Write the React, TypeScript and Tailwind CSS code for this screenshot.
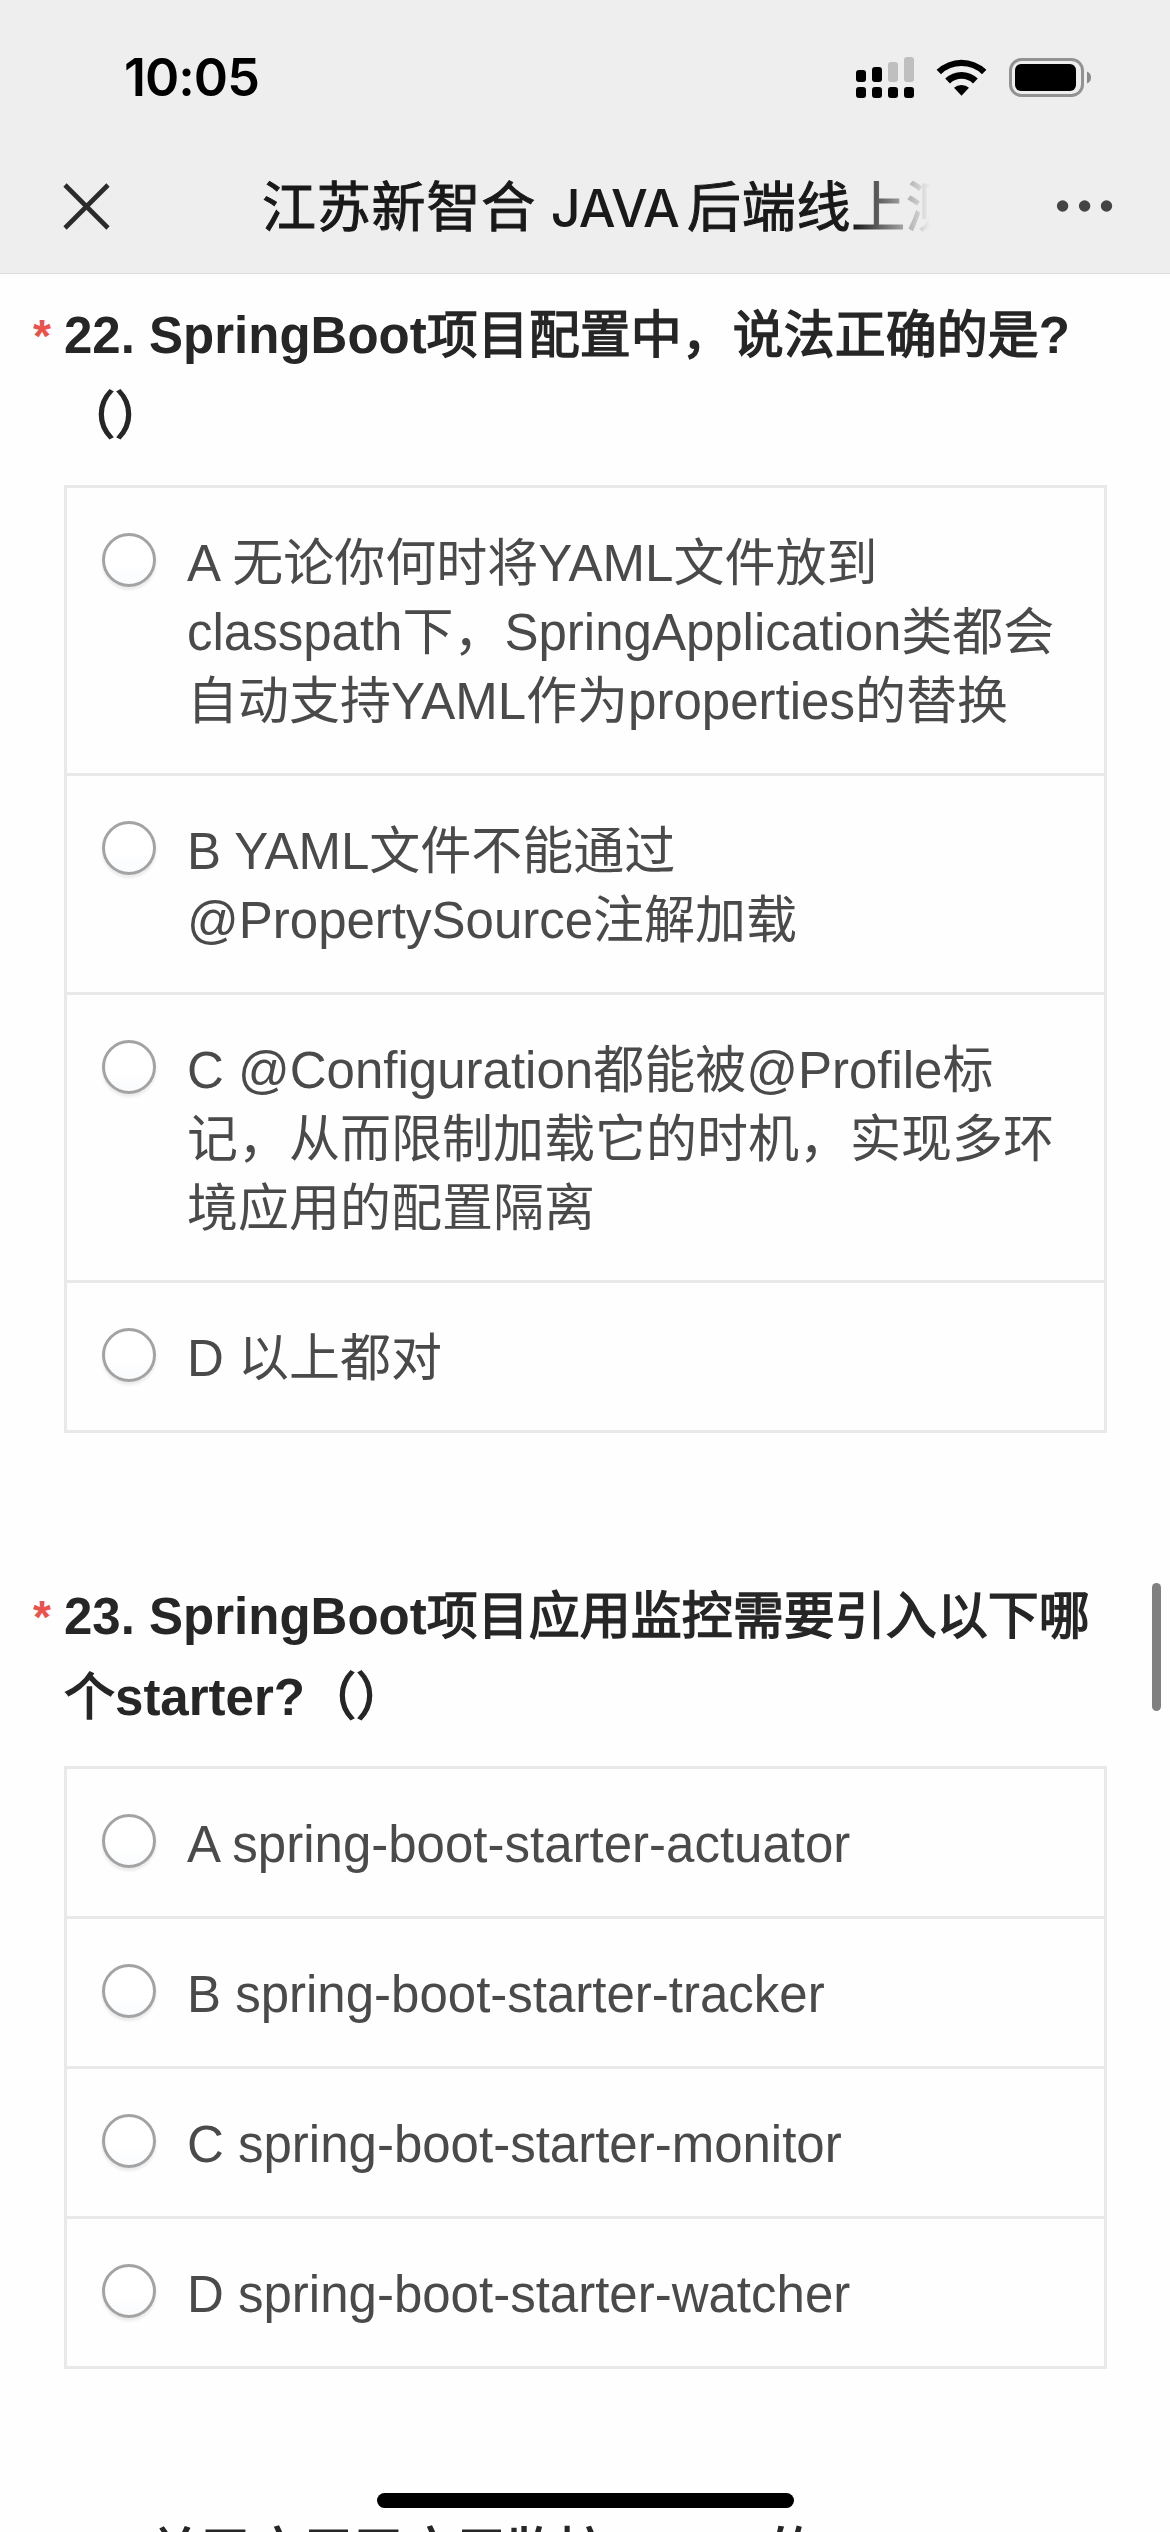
import React from "react";

type Question = {
  lines: string[];
  options: string[][];
};

const questions: Question[] = [
  {
    lines: ["22. SpringBoot项目配置中，说法正确的是?", "（）"],
    options: [
      ["A 无论你何时将YAML文件放到", "classpath下，SpringApplication类都会", "自动支持YAML作为properties的替换"],
      ["B YAML文件不能通过", "@PropertySource注解加载"],
      ["C @Configuration都能被@Profile标", "记，从而限制加载它的时机，实现多环", "境应用的配置隔离"],
      ["D 以上都对"],
    ],
  },
  {
    lines: ["23. SpringBoot项目应用监控需要引入以下哪", "个starter?（）"],
    options: [
      ["A spring-boot-starter-actuator"],
      ["B spring-boot-starter-tracker"],
      ["C spring-boot-starter-monitor"],
      ["D spring-boot-starter-watcher"],
    ],
  },
  {
    lines: ["24. 关于应用于应用监控starter的"],
    options: [],
  },
];

function StatusIcons() {
  return (
    <svg className="block" width="240" height="48" viewBox="852 54 240 48" fill="#000">
      <rect x="856" y="70" width="10" height="12" rx="3" />
      <rect x="872" y="67" width="10" height="15" rx="3" />
      <rect x="888" y="62" width="10" height="20" rx="3" fill="#bfbfbf" />
      <rect x="904" y="57" width="10" height="25" rx="3" fill="#bfbfbf" />
      <rect x="856" y="87" width="10" height="11" rx="3" />
      <rect x="872" y="87" width="10" height="11" rx="3" />
      <rect x="888" y="87" width="10" height="11" rx="3" />
      <rect x="904" y="87" width="10" height="11" rx="3" />
      <path d="M936.6 69.8 A36 36 0 0 1 986.4 69.8 L982 74.2 A29.5 29.5 0 0 0 941 74.2 Z" />
      <path d="M945.2 78.6 A23.5 23.5 0 0 1 977.8 78.6 L973 83.4 A16.8 16.8 0 0 0 950 83.4 Z" />
      <path d="M954 87.8 Q957 85 961.5 85 Q966 85 969 87.8 L961.5 95.8 Z" />
      <rect x="1010.5" y="59.5" width="72" height="36" rx="11" fill="none" stroke="#929292" strokeWidth="3" />
      <rect x="1015" y="64" width="61" height="27" rx="6" />
      <path d="M1087 71.5 Q1091 73 1091 77.5 Q1091 82 1087 83.5 Z" fill="#8a8a8a" />
    </svg>
  );
}

function OptionRow({ lines, last }: { lines: string[]; last: boolean }) {
  return (
    <div
      className={
        last
          ? "flex items-start pt-[41px] pb-[37px] pl-[35px]"
          : "flex items-start border-b-[3px] border-[#e9e9e9] pt-[41px] pb-[37px] pl-[35px]"
      }
    >
      <span className="mt-[4px] size-[54px] shrink-0 rounded-full border-[3px] border-[#a3a3a3] bg-gradient-to-b from-white from-60% to-[#f9fbfd] shadow-[0_3px_3px_rgba(0,0,0,0.08)]" />
      <span className="ml-[31px] text-[51px] leading-[69px] text-[#4a4a4a]">
        {lines.map((line) => (
          <span key={line} className="block whitespace-pre">
            {line}
          </span>
        ))}
      </span>
    </div>
  );
}

/* Chinese runs use a lighter weight than the bold Latin text beside them. */
function MixedText({ text }: { text: string }) {
  const runs = text.split(/([\u3000-\u9fff\uff00-\uffef]+)/).filter(Boolean);
  return (
    <>
      {runs.map((run, i) =>
        /[\u3000-\u9fff\uff00-\uffef]/.test(run) ? (
          <span key={i} className="font-normal [-webkit-text-stroke:1.5px_#262626]">
            {run}
          </span>
        ) : (
          <span key={i}>{run}</span>
        ),
      )}
    </>
  );
}

function QuestionBlock({ question }: { question: Question }) {
  return (
    <section className="mb-[143px]">
      <div className="flex h-[190px] pl-[33px]">
        <span className="w-[31px] shrink-0 text-[46px] leading-[82px] font-bold text-[#e9524d]">*</span>
        <h2 className="text-[51px] leading-[81px] font-bold text-[#262626]">
          {question.lines.map((line) => (
            <span key={line} className="block whitespace-pre">
              <MixedText text={line} />
            </span>
          ))}
        </h2>
      </div>
      {question.options.length > 0 && (
        <div className="ml-[64px] w-[1043px] border-[3px] border-[#e9e9e9]">
          {question.options.map((lines, i) => (
            <OptionRow key={lines[0]} lines={lines} last={i === question.options.length - 1} />
          ))}
        </div>
      )}
    </section>
  );
}

export default function App() {
  return (
    <div className="relative h-[2532px] w-[1170px] overflow-hidden bg-[#fefefe] font-['Liberation_Sans','Noto_Sans_CJK_SC',sans-serif]">
      <header className="h-[274px] border-b border-[#dedede] bg-[#eeeeee] font-['Inter','Noto_Sans_CJK_SC',sans-serif]">
        <div className="flex h-[144px] items-start justify-between pr-[78px] pl-[124px]">
          <span className="mt-[46px] text-[52px] leading-[64px] font-semibold tracking-[-1px] text-black">10:05</span>
          <div className="mt-[54px]">
            <StatusIcons />
          </div>
        </div>
        <div className="flex h-[124px] items-center">
          <svg className="ml-[62px] shrink-0" width="49" height="49" viewBox="0 0 49 49" stroke="#2b2b2b" strokeWidth="4.6" fill="none">
            <path d="M3 3 L46 46 M46 3 L3 46" />
          </svg>
          <h1 className="mt-[4px] ml-[151px] w-[710px] shrink-0 text-[54px] leading-[80px] whitespace-pre text-[#191919] [mask-image:linear-gradient(to_right,black_592px,transparent_668px)]">
            <span className="tracking-[0.8px] [-webkit-text-stroke:1px_#191919]">江苏新智合</span>
            <span className="ml-[2px] text-[52px] font-medium tracking-[-1px]"> JAVA</span>
            <span className="ml-[8px] tracking-[0.8px] [-webkit-text-stroke:1px_#191919]">后端线上测</span>
          </h1>
          <svg className="ml-[83px] shrink-0" width="60" height="14" viewBox="0 0 60 14" fill="#444">
            <circle cx="7.6" cy="7" r="5.7" />
            <circle cx="29.6" cy="7" r="5.7" />
            <circle cx="51.5" cy="7" r="5.7" />
          </svg>
        </div>
      </header>
      <main className="pt-[21px]">
        {questions.map((q) => (
          <QuestionBlock key={q.lines[0]} question={q} />
        ))}
      </main>
      <div className="absolute top-[1583px] left-[1152px] h-[128px] w-[9px] rounded-full bg-[#808080]" />
      <div className="absolute top-[2493px] left-[377px] h-[15px] w-[417px] rounded-full bg-black" />
    </div>
  );
}
